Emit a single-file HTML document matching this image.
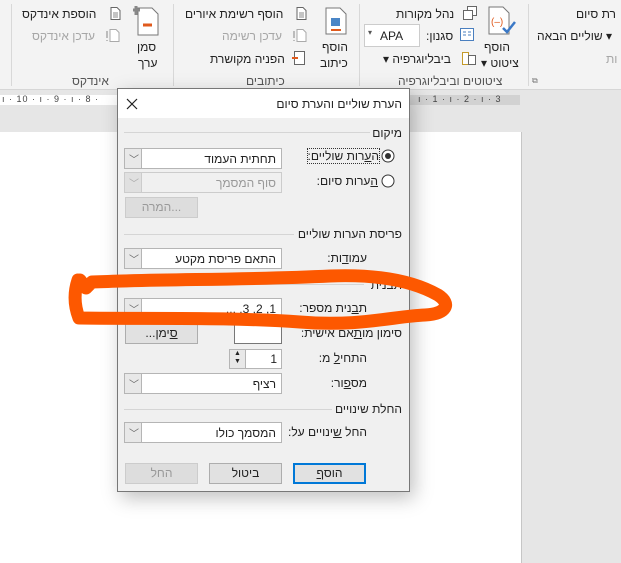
<!DOCTYPE html>
<html><head><meta charset="utf-8">
<style>
*{margin:0;padding:0;box-sizing:border-box}
body{width:621px;height:563px;overflow:hidden;position:relative;background:#e6e6e6;font-family:"Liberation Sans","DejaVu Sans",sans-serif;font-size:12px;color:#222}
.a{position:absolute;white-space:nowrap}
.r{direction:rtl}
.g{color:#a6a6a6}
#rib{position:absolute;left:0;top:0;width:621px;height:90px;background:#f3f3f3;border-bottom:1px solid #d6d6d6}
.sep{position:absolute;top:4px;width:1px;height:82px;background:#d8d8d8}
.gl{position:absolute;top:74px;font-size:12px;color:#555;direction:rtl}
.dlg{position:absolute;left:117px;top:88px;width:293px;height:404px;background:#f0f0f0;border:1px solid #777;box-shadow:4px 6px 18px rgba(0,0,0,.25)}
.dd{position:absolute;height:21px;background:#fff;border:1px solid #b5b5b5}
.dd .arr{position:absolute;left:0;top:0;width:17px;height:19px;background:#e8e8e8;border-right:1px solid #b5b5b5}
.dd .t{position:absolute;right:5px;top:3px;direction:rtl;font-size:12px}
.btn{position:absolute;height:21px;border:1px solid #adadad;background:#e1e1e1;text-align:center;line-height:19px;font-size:12px}
.lbl{position:absolute;direction:rtl;font-size:12px}
.hl{position:absolute;height:1px;background:#d5d5d5}
</style></head><body>
<div id="rib">
 <div class="sep" style="left:11px"></div>
 <div class="sep" style="left:173px"></div>
 <div class="sep" style="left:359px"></div>
 <div class="sep" style="left:528px"></div>
 <div class="a r" style="left:22px;top:7px">הוספת אינדקס</div>
 <svg class="a" style="left:110px;top:7px" width="11" height="13"><path d="M1 .5h6l3 3v9H1z" fill="#fff" stroke="#666"/><path d="M3 6h5M3 8h5M3 10h5" stroke="#888"/></svg>
 <div class="a r g" style="left:32px;top:29px">עדכן אינדקס</div>
 <svg class="a" style="left:106px;top:29px" width="14" height="13"><path d="M4 .5h6l3 3v9H4z" fill="#fff" stroke="#aaa"/><path d="M1 2v7M1 11v1" stroke="#aaa" stroke-width="1.5"/></svg>
 <svg class="a" style="left:133px;top:4px" width="28" height="32"><path d="M5 4h14l6 6v21H5z" fill="#fff" stroke="#777"/><path d="M10 21h9" stroke="#e05a1d" stroke-width="3"/><path d="M3 2v9M-1 6h8" stroke="#888" stroke-width="3"/></svg>
 <div class="a r" style="left:137px;top:40px">סמן</div>
 <div class="a r" style="left:138px;top:56px">ערך</div>
 <div class="a r" style="left:185px;top:7px">הוסף רשימת איורים</div>
 <svg class="a" style="left:296px;top:7px" width="11" height="13"><path d="M1 .5h6l3 3v9H1z" fill="#fff" stroke="#666"/><path d="M3 6h5M3 8h5M3 10h5" stroke="#888"/></svg>
 <div class="a r g" style="left:222px;top:29px">עדכן רשימה</div>
 <svg class="a" style="left:293px;top:29px" width="14" height="13"><path d="M4 .5h6l3 3v9H4z" fill="#fff" stroke="#aaa"/><path d="M1 2v7M1 11v1" stroke="#aaa" stroke-width="1.5"/></svg>
 <div class="a r" style="left:210px;top:52px">הפניה מקושרת</div>
 <svg class="a" style="left:291px;top:51px" width="14" height="14"><rect x="3.5" y=".5" width="10" height="13" fill="#fff" stroke="#666"/><path d="M1 7h6" stroke="#e05a1d" stroke-width="2"/></svg>
 <svg class="a" style="left:324px;top:7px" width="24" height="28"><path d="M2 1h14l6 6v20H2z" fill="#fff" stroke="#777"/><rect x="7" y="11" width="9" height="8" fill="#4a86c7"/><path d="M7 23h10" stroke="#e05a1d" stroke-width="2"/></svg>
 <div class="a r" style="left:322px;top:40px">הוסף</div>
 <div class="a r" style="left:320px;top:56px">כיתוב</div>
 <div class="a r" style="left:396px;top:7px">נהל מקורות</div>
 <svg class="a" style="left:462px;top:6px" width="16" height="14"><rect x="5.5" y=".5" width="9" height="9" fill="#fff" stroke="#666"/><rect x="1.5" y="4.5" width="9" height="9" fill="#fff" stroke="#666"/></svg>
 <div class="a r" style="left:426px;top:29px">סגנון:</div>
 <svg class="a" style="left:460px;top:28px" width="16" height="15"><rect x=".5" y=".5" width="13" height="12" fill="#fff" stroke="#4a7fbf"/><path d="M3 4h3M3 7h3M8 4h3M8 7h3" stroke="#4a7fbf"/></svg>
 <div class="a" style="left:364px;top:24px;width:56px;height:23px;background:#fff;border:1px solid #ccc"><span class="a" style="left:3px;top:3px;font-size:8px;color:#555">▾</span><span class="a" style="left:15px;top:4px;font-size:12px">APA</span></div>
 <div class="a r" style="left:383px;top:52px">ביבליוגרפיה ▾</div>
 <svg class="a" style="left:461px;top:51px" width="16" height="15"><rect x="1.5" y="1.5" width="6" height="12" fill="#fff" stroke="#c49a2a"/><rect x="7.5" y="4.5" width="7" height="9" fill="#fff" stroke="#666"/></svg>
 <svg class="a" style="left:487px;top:6px" width="30" height="30"><path d="M2 1h14l6 6v21H2z" fill="#fff" stroke="#777"/><text x="4" y="19" font-size="10" fill="#e05a1d" font-family="Liberation Sans">(–)</text><path d="M16 22l4 4 8-10" stroke="#3a78c6" stroke-width="2.5" fill="none"/></svg>
 <div class="a r" style="left:484px;top:40px">הוסף</div>
 <div class="a r" style="left:481px;top:56px">ציטוט ▾</div>
 <div class="gl" style="left:72px">אינדקס</div>
 <div class="gl" style="left:246px">כיתובים</div>
 <div class="gl" style="left:398px">ציטוטים וביבליוגרפיה</div>
 <div class="a" style="left:532px;top:76px;font-size:8px;color:#777">⧉</div>
 <div class="a r" style="left:576px;top:7px">רת סיום</div>
 <div class="a r" style="left:537px;top:29px">▾ שוליים הבאה</div>
 <div class="a r g" style="left:606px;top:52px">ות</div>
</div>
<div class="a" style="left:0;top:95px;width:117px;height:10px;background:#fff"></div>
<div class="a" style="left:2px;top:94px;font-size:9px;color:#444;letter-spacing:1px">ı · 10 · ı · 9 · ı · 8 ·</div>
<div class="a" style="left:410px;top:95px;width:110px;height:10px;background:#d2d2d2"></div>
<div class="a" style="left:418px;top:94px;font-size:9px;color:#444;letter-spacing:1px">ı · 1 · ı · 2 · ı · 3</div>
<div class="a" style="left:0;top:132px;width:522px;height:431px;background:#fff;border-right:1px solid #c6c6c6"></div>
<div class="dlg">
 <div class="a" style="left:0;top:0;width:291px;height:29px;background:#fff"></div>
 <svg class="a" style="left:8px;top:9px" width="12" height="12"><path d="M1 1l10 10M11 1L1 11" stroke="#222" stroke-width="1.2"/></svg>
 <div class="lbl" style="right:7px;top:8px">הערת שוליים והערת סיום</div>
 <div class="lbl" style="right:7px;top:37px">מיקום</div>
 <div class="hl" style="left:6px;top:43px;width:246px"></div>
 <div class="dd" style="left:6px;top:59px;width:158px"><div class="arr"></div><span class="a" style="left:4px;top:2px;font-size:10px;color:#666">﹀</span><span class="t">תחתית העמוד</span></div>
 <svg class="a" style="left:263px;top:60px" width="14" height="14"><circle cx="7" cy="7" r="6" fill="#fff" stroke="#333"/><circle cx="7" cy="7" r="3" fill="#333"/></svg>
 <div class="lbl" style="right:30px;top:60px;outline:1px dotted #333">ה<u>ע</u>רות שוליים:</div>
 <div class="dd" style="left:6px;top:83px;width:158px;background:#f0f0f0;border-color:#ccc"><div class="arr" style="background:#e0e0e0;border-color:#ccc"></div><span class="a" style="left:4px;top:2px;font-size:10px;color:#aaa">﹀</span><span class="t" style="color:#999">סוף המסמך</span></div>
 <svg class="a" style="left:263px;top:85px" width="14" height="14"><circle cx="7" cy="7" r="6" fill="#fff" stroke="#333"/></svg>
 <div class="lbl" style="right:31px;top:85px"><u>ה</u>ערות סיום:</div>
 <div class="btn" style="left:7px;top:108px;width:73px;color:#999;border-color:#ccc;background:#ddd">המרה...</div>
 <div class="lbl" style="right:7px;top:138px">פריסת הערות שוליים</div>
 <div class="hl" style="left:6px;top:145px;width:170px"></div>
 <div class="dd" style="left:6px;top:159px;width:158px"><div class="arr"></div><span class="a" style="left:4px;top:2px;font-size:10px;color:#666">﹀</span><span class="t">התאם פריסת מקטע</span></div>
 <div class="lbl" style="right:42px;top:162px">עמו<u>ד</u>ות:</div>
 <div class="lbl" style="right:7px;top:189px">תבנית</div>
 <div class="hl" style="left:6px;top:195px;width:240px"></div>
 <div class="dd" style="left:6px;top:209px;width:158px"><div class="arr"></div><span class="a" style="left:4px;top:2px;font-size:10px;color:#666">﹀</span><span class="t">1, 2, 3, ...</span></div>
 <div class="lbl" style="right:42px;top:212px">ת<u>ב</u>נית מספר:</div>
 <div class="a" style="left:116px;top:234px;width:48px;height:21px;background:#fff;border:1px solid #777"></div>
 <div class="btn" style="left:7px;top:234px;width:73px">...<u>ס</u>ימן</div>
 <div class="lbl" style="right:7px;top:237px">סימון מו<u>ת</u>אם אישית:</div>
 <div class="a" style="left:111px;top:260px;width:53px;height:20px;background:#fff;border:1px solid #b5b5b5"><div class="a" style="left:0;top:0;width:16px;height:18px;background:#e8e8e8;border-right:1px solid #b5b5b5;font-size:7px;line-height:8px;text-align:center">▲<br>▼</div><span class="a" style="right:4px;top:2px">1</span></div>
 <div class="lbl" style="right:42px;top:262px">התחי<u>ל</u> מ:</div>
 <div class="dd" style="left:6px;top:284px;width:158px"><div class="arr"></div><span class="a" style="left:4px;top:2px;font-size:10px;color:#666">﹀</span><span class="t">רציף</span></div>
 <div class="lbl" style="right:42px;top:287px">מס<u>פ</u>ור:</div>
 <div class="lbl" style="right:7px;top:313px">החלת שינויים</div>
 <div class="hl" style="left:6px;top:320px;width:208px"></div>
 <div class="dd" style="left:6px;top:333px;width:158px"><div class="arr"></div><span class="a" style="left:4px;top:2px;font-size:10px;color:#666">﹀</span><span class="t">המסמך כולו</span></div>
 <div class="lbl" style="right:42px;top:336px">החל <u>ש</u>ינויים על:</div>
 <div class="btn" style="left:175px;top:374px;width:73px;border:2px solid #0078d7;line-height:17px">הוס<u>ף</u></div>
 <div class="btn" style="left:91px;top:374px;width:73px">ביטול</div>
 <div class="btn" style="left:7px;top:374px;width:73px;color:#999;border-color:#ccc;background:#ddd">החל</div>
</div>
<svg class="a" style="left:0;top:0" width="621" height="563"><path d="M80 280 L86 288 L92 282 C160 279 250 280 330 276 C380 274 415 282 438 295 C452 304 446 314 425 315 C395 316 360 327 300 322 C230 317 150 319 79 318 C74 305 74 292 78 280" fill="none" stroke="#fd5800" stroke-width="13" stroke-linejoin="round" stroke-linecap="round"/></svg>
</body></html>
